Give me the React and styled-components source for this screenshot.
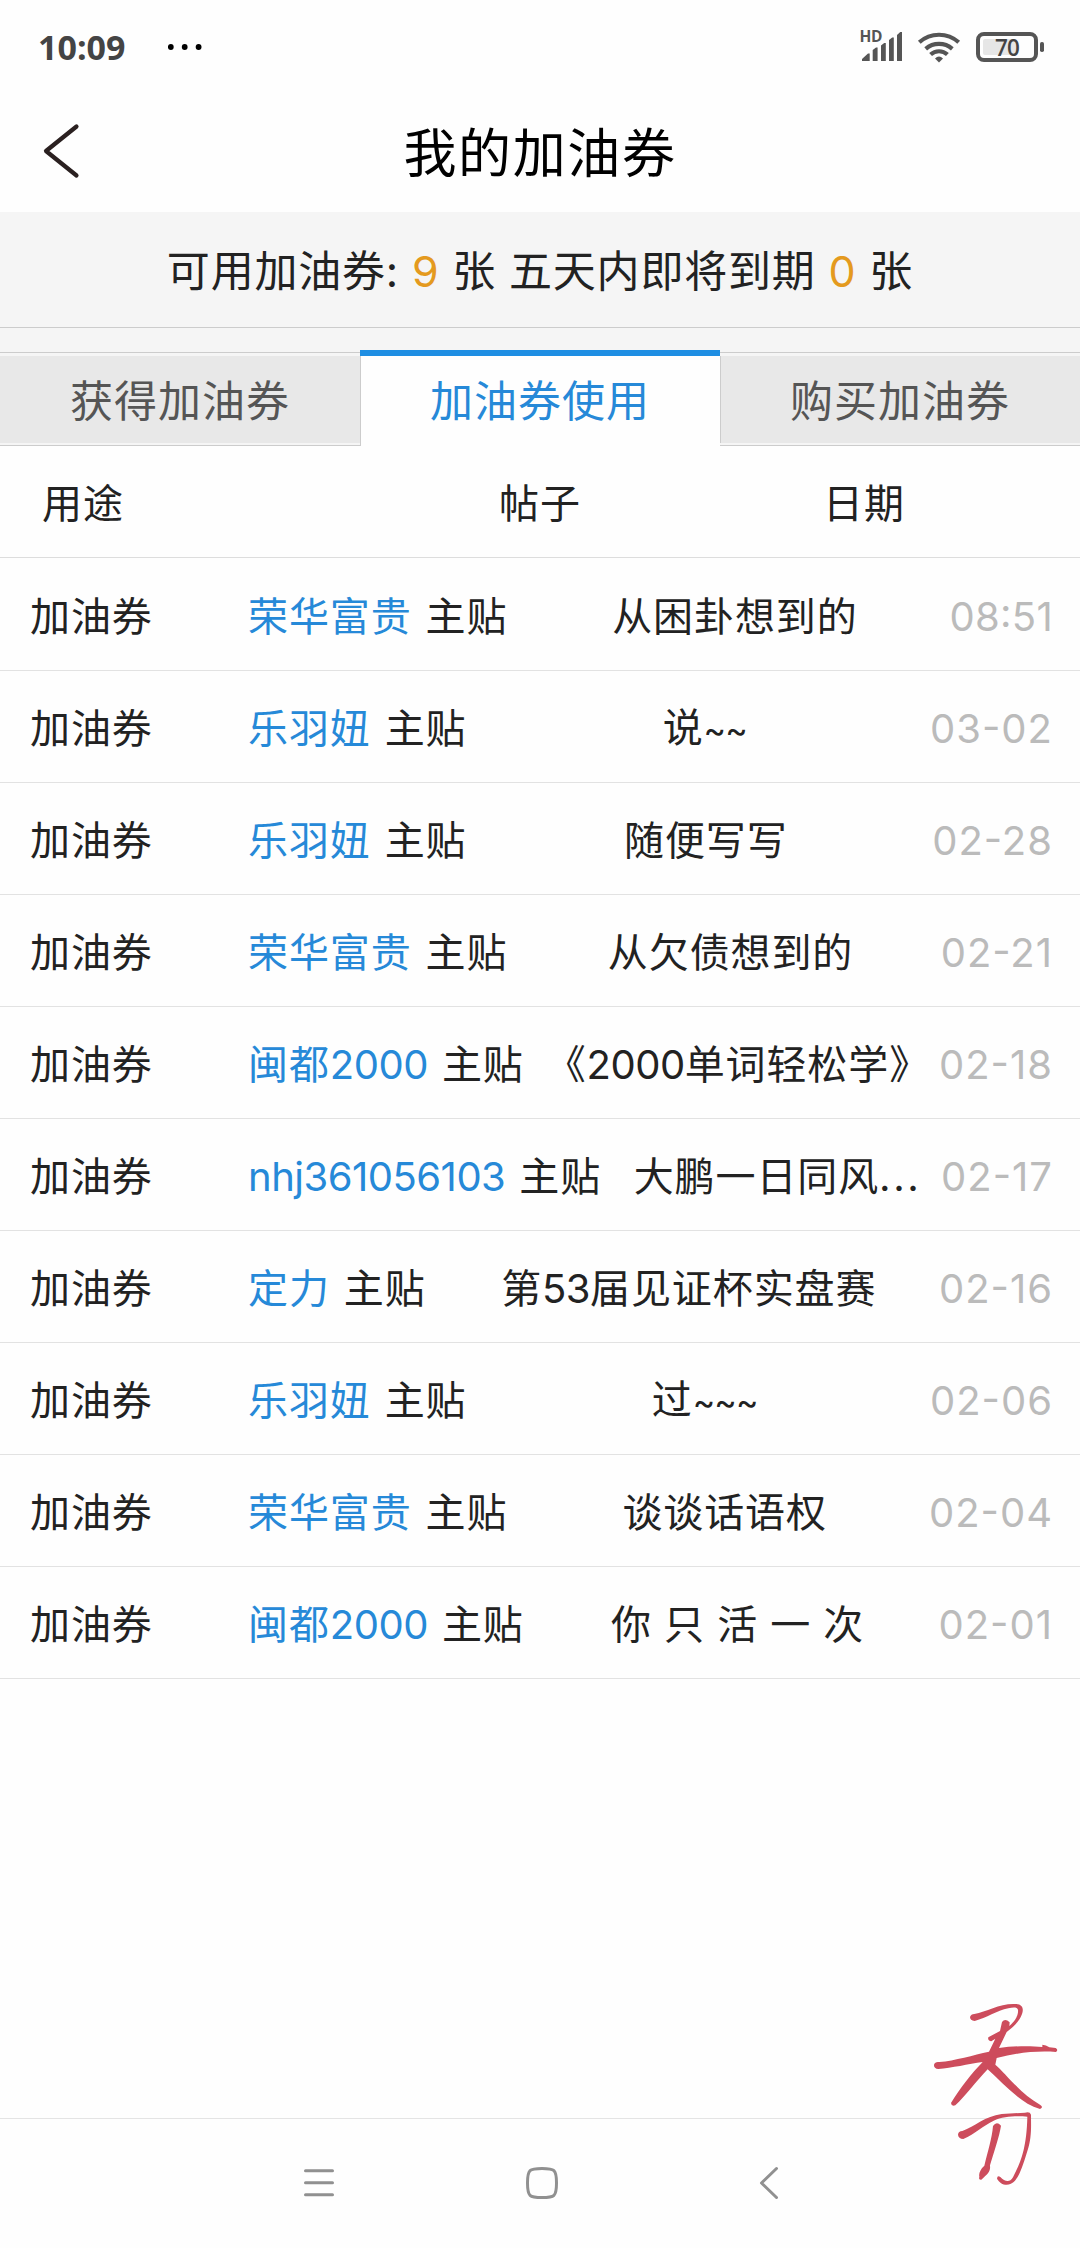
import React from 'react';
import styled, { createGlobalStyle } from 'styled-components';

const GlobalStyle = createGlobalStyle`
  * { box-sizing: border-box; }
  body {
    margin: 0;
    background: #fefefe;
    color: #222;
    font-family: Inter, "Noto Sans CJK SC", sans-serif;
  }
`;

const Screen = styled.div`
  position: relative;
  width: 1080px;
  height: 2248px;
  display: flex;
  flex-direction: column;
  background: #fefefe;
  overflow: hidden;
`;

const StatusBar = styled.div`
  height: 94px;
  flex: none;
  display: flex;
  align-items: center;
  padding: 0 36px 0 38px;
  color: #444;
`;

const Clock = styled.span`
  width: 130px;
  font: 700 34px/40px "Open Sans", "Noto Sans", sans-serif;
`;

const StatusIcons = styled.div`
  margin-left: auto;
  display: flex;
`;

const NavBar = styled.header`
  height: 118px;
  flex: none;
  display: grid;
  grid-template-columns: 100px 1fr 100px;
  align-items: center;
  padding: 0 0 4px;
`;

const BackIcon = styled.svg`
  margin: 0 0 0 40px;
`;

const Title = styled.h1`
  margin: 0;
  padding-top: 5px;
  text-align: center;
  font-size: 53px;
  line-height: 70px;
  font-weight: 400;
  letter-spacing: 1.6px;
  color: #000;
`;

const Summary = styled.div`
  height: 116px;
  flex: none;
  display: flex;
  align-items: center;
  justify-content: center;
  background: #f5f5f5;
  border-bottom: 1px solid #ccc;
  padding-top: 3px;
  font-size: 43px;
  letter-spacing: 0.8px;
  line-height: 60px;
  white-space: pre;
`;

const Count = styled.span`
  color: #e49a1e;
`;

const TabStrip = styled.div`
  height: 118px;
  flex: none;
  padding-top: 22px;
  background: linear-gradient(#f5f5f5 24px, #ccc 24px, #ccc 25px, #f5f5f5 25px, #f5f5f5 117px, #ccc 117px);
`;

const Tabs = styled.div`
  display: grid;
  grid-template-columns: repeat(3, 360px);
  height: 96px;
`;

const Tab = styled.button`
  border: 0;
  margin: ${p => (p.$active ? '0' : '6px 0 3px')};
  padding: 2px 0 ${p => (p.$active ? '3px' : '0')};
  border-top: ${p => (p.$active ? '6px solid #1e8ee3' : '0')};
  background: ${p => (p.$active ? '#fefefe' : '#e8e8e8')};
  color: ${p => (p.$active ? '#2689d8' : '#555')};
  box-shadow: ${p => (p.$edge ? 'inset 1px 0 #ccc' : 'none')};
  font: inherit;
  font-size: 43px;
  letter-spacing: 1px;
  line-height: 60px;
`;

const TableHead = styled.div`
  height: 112px;
  flex: none;
  display: grid;
  grid-template-columns: 358px 364px 358px;
  align-items: center;
  padding-bottom: 2px;
  border-bottom: 1px solid #ddd;
  font-size: 40px;
  letter-spacing: 1px;
`;

const HeadCell = styled.span`
  text-align: ${p => p.$align || 'left'};
  padding-left: ${p => p.$pad || 0}px;
`;

const Row = styled.div`
  height: 112px;
  flex: none;
  display: flex;
  align-items: center;
  padding: 5px 27px 0 30px;
  border-bottom: 1px solid #e2e2e2;
  font-size: 40px;
  letter-spacing: 0.9px;
  line-height: 60px;
  white-space: pre;

  &:first-child { height: 113px; }
`;

const Kind = styled.span`
  width: 218px;
`;

const User = styled.span`
  color: #2689d8;
`;

const Target = styled.span`
  margin-left: 14px;
`;

const Post = styled.span`
  flex: 1;
  padding-left: 13px;
  text-align: center;
`;

const When = styled.time`
  color: #bbb;
  letter-spacing: ${p => (p.$clock ? 0.3 : 1)}px;
  font-feature-settings: "case";
`;

const Latin = styled.span`
  letter-spacing: -0.5px;
`;

const Tilde = styled.span`
  font-size: 34px;
  letter-spacing: -0.8px;
`;

const Dots = styled.span`
  letter-spacing: 2.6px;
`;

const SystemNav = styled.nav`
  margin-top: auto;
  height: 130px;
  flex: none;
  display: flex;
  align-items: center;
  border-top: 1px solid #e4e4e4;
  padding: 0 0 1px 299px;
`;

const NavIcon = styled.svg`
  margin-right: ${p => p.$gap || 0}px;
`;

const Signature = styled.svg`
  position: absolute;
  left: 880px;
  top: 1960px;
`;

const rows = [
  ['荣华富贵', '从困卦想到的', '08:51'],
  ['乐羽妞', '说~~', '03-02'],
  ['乐羽妞', '随便写写', '02-28'],
  ['荣华富贵', '从欠债想到的', '02-21'],
  ['闽都2000', '《2000单词轻松学》', '02-18'],
  ['nhj361056103', '大鹏一日同风...', '02-17'],
  ['定力', '第53届见证杯实盘赛', '02-16'],
  ['乐羽妞', '过~~~', '02-06'],
  ['荣华富贵', '谈谈话语权', '02-04'],
  ['闽都2000', '你 只 活 一 次', '02-01'],
];

// Gives each run of latin letters, tildes or dots its own tracking.
function Mixed({ children }) {
  return children.split(/([a-z0-9]+|~+|\.+)/).map((part, i) => {
    if (/^[a-z0-9]/.test(part)) return <Latin key={i}>{part}</Latin>;
    if (part[0] === '~') return <Tilde key={i}>{part}</Tilde>;
    if (part[0] === '.') return <Dots key={i}>{part}</Dots>;
    return part;
  });
}

export default function App() {
  return (
    <Screen>
      <GlobalStyle />
      <StatusBar>
        <Clock>10:09</Clock>
        <svg width="36" height="8" viewBox="0 0 36 8" fill="#000">
          <circle cx="2.8" cy="4" r="2.9" />
          <circle cx="16.7" cy="4" r="2.9" />
          <circle cx="30.6" cy="4" r="2.9" />
        </svg>
        <StatusIcons>
          <svg width="190" height="54" viewBox="854 20 190 54" fill="#555">
            <text x="859.500" y="42" fontFamily="Open Sans" fontWeight="700" fontSize="15.5" letterSpacing="-0.3">HD</text>
            <path d="M862 61v-2l6-5.500h1.700V61z M872.700 61V50l3.300-2.500h1.600V61z M881 61V45.500l3.200-2.500h1.600V61z M889 61V40l3.200-2.500h1.600V61z M897 61V35l3.200-3h1.800V61z" />
            <g fill="none" stroke="#555" strokeWidth="4.200">
              <path d="M919.300 42.300a29.500 29.500 0 0 1 39.400 0" />
              <path d="M925.700 48.800a20.500 20.500 0 0 1 26.600 0" />
              <path d="M930.600 54.500a12.500 12.500 0 0 1 16.800 0" />
            </g>
            <path d="M935 58.500q4-4 8 0l-4 4z" />
            <rect x="978" y="34" width="58" height="26" rx="6" fill="none" stroke="#555" strokeWidth="4" />
            <rect x="983" y="39" width="34" height="16" rx="2" fill="#e6e6e6" />
            <rect x="1040" y="42" width="4" height="10" rx="1.800" />
            <text x="1007" y="55.500" textAnchor="middle" fontFamily="Open Sans" fontWeight="600" fontSize="22.500" letterSpacing="-0.8" fill="#444">70</text>
          </svg>
        </StatusIcons>
      </StatusBar>

      <NavBar>
        <BackIcon width="42" height="60" viewBox="0 0 42 60" fill="none" stroke="#2a2020" strokeWidth="4.200" strokeLinecap="round" strokeLinejoin="round">
          <path d="M36.500 5.500L6 30l30.500 24.500" />
        </BackIcon>
        <Title>我的加油券</Title>
      </NavBar>

      <Summary>
        <span>可用加油券: </span>
        <Count>9</Count>
        <span> 张 五天内即将到期 </span>
        <Count>0</Count>
        <span> 张</span>
      </Summary>

      <TabStrip>
        <Tabs>
          <Tab>获得加油券</Tab>
          <Tab $active $edge>加油券使用</Tab>
          <Tab $edge>购买加油券</Tab>
        </Tabs>
      </TabStrip>

      <TableHead>
        <HeadCell $pad={42}>用途</HeadCell>
        <HeadCell $align="center">帖子</HeadCell>
        <HeadCell $pad={101}>日期</HeadCell>
      </TableHead>

      <div>
        {rows.map(([user, post, when], i) => (
          <Row key={i}>
            <Kind>加油券</Kind>
            <User><Mixed>{user}</Mixed></User>
            <Target>主贴</Target>
            <Post><Mixed>{post}</Mixed></Post>
            <When $clock={when.includes(':')}>{when}</When>
          </Row>
        ))}
      </div>

      <SystemNav>
        <NavIcon $gap={191} width="36" height="36" viewBox="0 0 36 36" stroke="#909090" strokeWidth="3" strokeLinecap="round">
          <path d="M6.500 5.700h27M6.500 17.700h27M6.500 29.700h27" />
        </NavIcon>
        <NavIcon $gap={200} width="32" height="32" viewBox="0 0 32 32" fill="none" stroke="#909090" strokeWidth="3">
          <path d="M16 1.500C28.500 1.500 30.500 2.500 30.500 16S28.500 30.500 16 30.500 1.500 29.500 1.500 16 3.500 1.500 16 1.500z" />
        </NavIcon>
        <NavIcon width="22" height="36" viewBox="0 0 22 36" fill="none" stroke="#909090" strokeWidth="3" strokeLinecap="round" strokeLinejoin="round">
          <path d="M18.500 3.500L3.500 18l15 14.500" />
        </NavIcon>
      </SystemNav>

      <Signature width="200" height="288" viewBox="0 0 600 864" fill="#cd4c5c">
        <path d="M283 162C320 155 360 130 405 132C430 132 431 148 426 162C418 184 400 202 380 216L357 264C400 258 450 257 487 261L487 254Q498 254 508 262L527 264Q536 270 528 276C470 272 410 278 350 294L346 314C375 338 420 400 480 434Q492 442 480 447C420 430 370 370 323 328C290 362 255 410 226 436Q214 440 213 429C240 385 275 340 308 306C265 312 215 324 175 327Q161 325 162 314Q165 304 178 306C225 302 280 285 327 275L346 236L334 244Q322 242 325 232L360 213L366 186Q375 174 389 187L388 198C405 184 416 165 414 149C411 141 400 142 385 145C350 152 320 174 284 183Q270 181 270 171Q273 162 283 162z" />
        <path d="M247 513C285 500 315 468 365 462L435 458Q450 454 453 464C453 500 456 535 440 580C430 612 420 645 405 662C387 682 362 676 351 656Q352 645 361 651C374 664 388 670 399 652C420 610 440 570 442 470C410 468 370 468 341 482C310 496 285 522 250 537Q235 536 234 524Q235 513 247 513z" />
        <path d="M339 498Q350 482 363 497C358 530 342 575 330 616Q332 632 322 642L304 659Q295 660 298 650C296 640 302 626 313 617C323 575 336 535 339 498z" />
      </Signature>
    </Screen>
  );
}
